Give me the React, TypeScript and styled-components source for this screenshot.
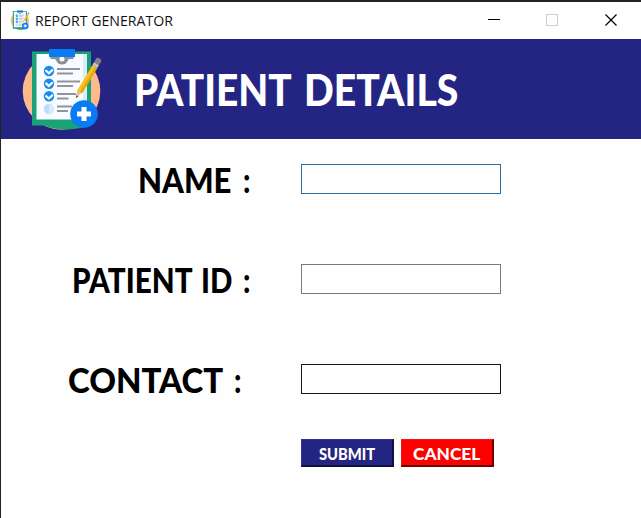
import React from "react";
import styled, { createGlobalStyle } from "styled-components";

const GlobalStyle = createGlobalStyle`
  * { box-sizing: border-box; }
  body { margin: 0; background: #fff; }
`;

const Window = styled.div`
  display: flex;
  flex-direction: column;
  width: 641px;
  height: 518px;
  overflow: hidden;
  background: #fefefe;
  border-top: 2px solid #242223;
  border-left: 1px solid #242424;
  font-family: Lato, "Liberation Sans", sans-serif;
`;

const TitleBar = styled.div`
  display: flex;
  align-items: flex-start;
  height: 37px;
  flex: none;
  padding-left: 9px;
  background: #fff;

  > svg {
    margin-top: 8px;
  }
`;

const WindowTitle = styled.span`
  flex: 1;
  margin-left: 5px;
  font: 400 15px/36px "Open Sans", sans-serif;
  color: #111;
  white-space: pre;
  transform: scaleX(0.942);
  transform-origin: left;
`;

const Controls = styled.div`
  display: flex;
  flex: none;
  height: 36px;
  padding-right: 1px;
`;

const ControlButton = styled.button<{ $dim?: boolean }>`
  display: grid;
  place-items: center;
  width: 58.5px;
  padding: 0;
  border: 0;
  background: none;
  color: ${(p) => (p.$dim ? "#cccccc" : "#000")};
`;

const Header = styled.header`
  display: flex;
  align-items: center;
  height: 100px;
  flex: none;
  padding-left: 19px;
  background: #242582;
`;

const Heading = styled.h1`
  display: flex;
  margin: 0 0 0 30px;
  padding-top: 2px;
  font-size: 43px;
  font-weight: 900;
  line-height: 98px;
  color: #fff;
`;

const Word = styled.span<{ $width: number; $stretch: number }>`
  display: block;
  flex: none;
  width: ${(p) => p.$width}px;
  white-space: nowrap;
  transform: scaleX(${(p) => p.$stretch});
  transform-origin: left;
`;

const Form = styled.form`
  display: flex;
  flex-direction: column;
  gap: 70px;
  padding-top: 25px;
`;

const Row = styled.div`
  display: grid;
  grid-template-columns: 300px 200px;
  height: 30px;
`;

const Label = styled.label<{ $indent: number }>`
  display: flex;
  padding-left: ${(p) => p.$indent}px;
  font-size: 33.5px;
  font-weight: 900;
  line-height: 32px;
  color: #000;
`;

const Field = styled.input<{ $edge: string }>`
  width: 200px;
  height: 30px;
  padding: 0 4px;
  border: 1px solid ${(p) => p.$edge};
  border-radius: 0;
  outline: 0;
  background: #fff;
`;

const Actions = styled.div`
  display: flex;
  gap: 7px;
  margin-top: -25px;
  padding-left: 300px;
`;

const ActionButton = styled.button<{ $fill: string; $light: string; $dark: string; $pad: number }>`
  width: 93px;
  height: 28px;
  padding: 2px 0 0 ${(p) => p.$pad}px;
  border: solid;
  border-width: 1px 2px 2px 1px;
  border-color: ${(p) => `${p.$light} ${p.$dark} ${p.$dark} ${p.$light}`};
  background: ${(p) => p.$fill};
  color: #fff;
  font: 900 16px/23px Lato, sans-serif;
  text-align: left;
`;

function ClipboardIcon({ size }: { size: number }) {
  return (
    <svg width={size} height={size} viewBox="0 0 84 84" aria-hidden="true">
      <circle cx="41.5" cy="44" r="38.800" fill="#fdbb8b" />
      <path d="M12 4.500h59v74q-28 8-47 0H12z" fill="#1aa276" />
      <path d="M16.500 7h50.500v65.500H16.500z" fill="#f8fbff" />
      <path d="M63 7h4v65.500h-4z" fill="#dcebfa" />
      <path d="M30.500 10h23v2h-3.500q-2 0-2.500 2-1.500 3.500-5.500 3.500T36.500 14q-.5-2-2.500-2h-3.500z" fill="#8b8f98" />
      <circle cx="42" cy="12" r="2.500" fill="#f8fbff" />
      <path d="M29 2h26v8H29z" fill="#087cf4" />
      {[24, 36.7, 49.3].map((y) => (
        <g key={y}>
          <circle cx="29" cy={y} r="5.200" fill="#148cf0" />
          <path d={`M25.500 ${y - 0.8}l3.300 3 4-3.600`} fill="none" stroke="#fff" strokeWidth="2.200" />
        </g>
      ))}
      <circle cx="29" cy="62" r="5.200" fill="#bddcfb" />
      <path d="M29 56.800a5.200 5.200 0 0 1 0 10.400z" fill="#d8eafd" />
      <path
        d="M37 22h23M37 26.500h16M37 34.500h23M37 39h16M37 47h19M37 51.500h11.500M37 59.500h15M37 64h11"
        stroke="#92949c"
        strokeWidth="2"
      />
      <g transform="translate(3.900 4.900) scale(.93 .91)">
        <path d="M56 50l1.500-8.500 5 3z" fill="#e8bd94" />
        <path d="M56 51l.5-3.500 2 1.200z" fill="#473438" />
        <path d="M57.300 42.500L74 14.500l5 3-16.500 28z" fill="#fcc313" />
        <path d="M60.500 43.500L77 16.500l2 1.200-16.500 27.800z" fill="#e9a313" />
        <path d="M73.500 14.500l2-3.300 5.300 3.100-2 3.300z" fill="#bec0c5" />
        <path d="M75.500 11l2.300-4q1-1.200 4.200.5 2 1.800 1 3.200l-2.300 3.700z" fill="#858087" />
      </g>
      <circle cx="64" cy="67" r="13.800" fill="#087bf5" />
      <path d="M61.500 60h5v4.500H71v5h-4.500V74h-5v-4.500H57v-5h4.500z" fill="#fff" />
    </svg>
  );
}

export default function App() {
  return (
    <>
      <GlobalStyle />
      <Window>
        <TitleBar>
          <ClipboardIcon size={20} />
          <WindowTitle>REPORT GENERATOR</WindowTitle>
          <Controls>
            <ControlButton aria-label="Minimize">
              <svg width="12" height="12" shapeRendering="crispEdges">
                <path d="M0 5.500h12" stroke="currentColor" />
              </svg>
            </ControlButton>
            <ControlButton $dim aria-label="Maximize" disabled>
              <svg width="12" height="12" shapeRendering="crispEdges">
                <path d="M.5.5h11v11H.5z" fill="none" stroke="currentColor" />
              </svg>
            </ControlButton>
            <ControlButton aria-label="Close">
              <svg width="12" height="12">
                <path d="M.5.5l11 11M11.500.5l-11 11" stroke="currentColor" strokeWidth="1.200" />
              </svg>
            </ControlButton>
          </Controls>
        </TitleBar>
        <Header>
          <ClipboardIcon size={84} />
          <Heading>
            <Word $width={170} $stretch={0.902}>PATIENT</Word>
            <Word $width={160} $stretch={0.91}>DETAILS</Word>
          </Heading>
        </Header>
        <Form onSubmit={(e) => e.preventDefault()}>
          <Row>
            <Label htmlFor="name" $indent={137}>
              <Word $width={105} $stretch={0.93}>NAME</Word>
              <Word $width={8} $stretch={0.85}>:</Word>
            </Label>
            <Field id="name" $edge="#286fa8" />
          </Row>
          <Row>
            <Label htmlFor="patient" $indent={71}>
              <Word $width={129} $stretch={0.885}>PATIENT</Word>
              <Word $width={42} $stretch={0.88}>ID</Word>
              <Word $width={8} $stretch={0.85}>:</Word>
            </Label>
            <Field id="patient" $edge="#7a7a7a" />
          </Row>
          <Row>
            <Label htmlFor="contact" $indent={67}>
              <Word $width={166} $stretch={0.985}>CONTACT</Word>
              <Word $width={8} $stretch={0.85}>:</Word>
            </Label>
            <Field id="contact" $edge="#171717" />
          </Row>
          <Actions>
            <ActionButton type="submit" $fill="#242582" $light="#30318c" $dark="#10103c" $pad={17}>
              <Word $width={56} $stretch={0.92}>SUBMIT</Word>
            </ActionButton>
            <ActionButton type="button" $fill="#fe0000" $light="#f51616" $dark="#700000" $pad={11}>
              <Word $width={68} $stretch={1.08}>CANCEL</Word>
            </ActionButton>
          </Actions>
        </Form>
      </Window>
    </>
  );
}
